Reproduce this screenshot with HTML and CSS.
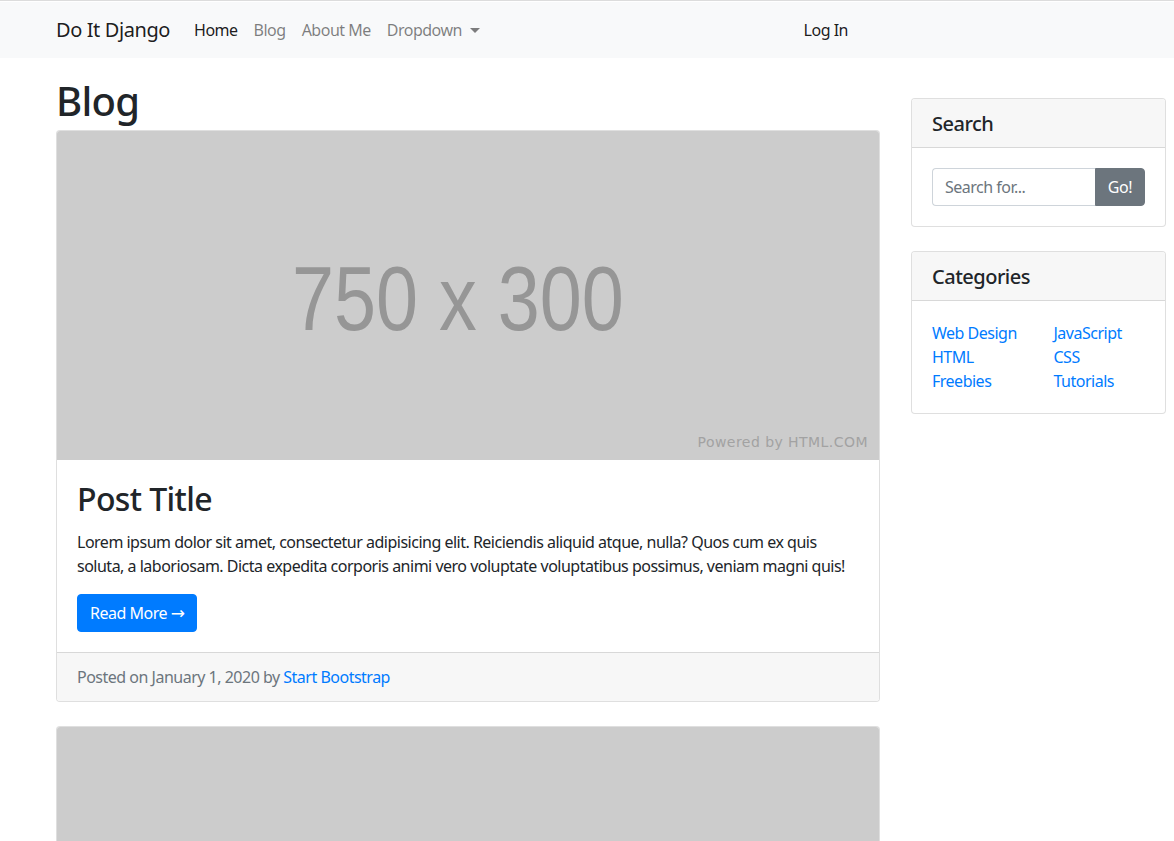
FILE: index.html
```html
<!DOCTYPE html>
<html lang="en">
<head>
<meta charset="utf-8">
<title>Blog</title>
<link rel="stylesheet" href="styles.css">
</head>
<body>
<nav class="navbar">
  <div class="nav-inner">
    <a class="brand" href="#">Do It Django</a>
    <ul class="nav-links">
      <li><a class="nav-link active" href="#">Home</a></li>
      <li><a class="nav-link" href="#">Blog</a></li>
      <li><a class="nav-link" href="#">About Me</a></li>
      <li><a class="nav-link dropdown" href="#">Dropdown<span class="caret"></span></a></li>
    </ul>
    <ul class="nav-links nav-right">
      <li><a class="nav-link active" href="#">Log In</a></li>
    </ul>
  </div>
</nav>

<div class="page">
  <main class="main-col">
    <h1 class="page-title">Blog</h1>

    <article class="card post">
      <div class="placeholder">
        <span class="ph-size">750 x 300</span>
        <span class="ph-credit">Powered by HTML.COM</span>
      </div>
      <div class="card-body">
        <h2 class="post-title">Post Title</h2>
        <p class="post-text">Lorem ipsum dolor sit amet, consectetur adipisicing elit. Reiciendis aliquid atque, nulla? Quos cum ex quis soluta, a laboriosam. Dicta expedita corporis animi vero voluptate voluptatibus possimus, veniam magni quis!</p>
        <a class="btn btn-primary" href="#">Read More <span class="arrow">&rarr;</span></a>
      </div>
      <div class="card-footer">Posted on January 1, 2020 by <a href="#">Start Bootstrap</a></div>
    </article>

    <article class="card post">
      <div class="placeholder"></div>
    </article>
  </main>

  <aside class="side-col">
    <section class="card widget">
      <h5 class="card-header">Search</h5>
      <div class="card-body">
        <div class="input-group">
          <input class="form-control" type="text" placeholder="Search for...">
          <button class="btn btn-secondary" type="button">Go!</button>
        </div>
      </div>
    </section>

    <section class="card widget">
      <h5 class="card-header">Categories</h5>
      <div class="card-body">
        <div class="cat-grid">
          <ul class="cat-list">
            <li><a href="#">Web Design</a></li>
            <li><a href="#">HTML</a></li>
            <li><a href="#">Freebies</a></li>
          </ul>
          <ul class="cat-list">
            <li><a href="#">JavaScript</a></li>
            <li><a href="#">CSS</a></li>
            <li><a href="#">Tutorials</a></li>
          </ul>
        </div>
      </div>
    </section>
  </aside>
</div>
</body>
</html>
```

FILE: styles.css
```css
* { box-sizing: border-box; }

html, body { margin: 0; padding: 0; }

body {
  font-family: "Noto Sans", "Open Sans", sans-serif;
  font-size: 16px;
  line-height: 1.5;
  color: #212529;
  background: #fff;
  letter-spacing: -0.5px;
  border-top: 1px solid #dcdcdc;
  padding-top: 1px;
  overflow: hidden;
}

a { text-decoration: none; color: #007bff; }

/* navbar */
.navbar {
  background: #f8f9fa;
  height: 56px;
}
.nav-inner {
  display: flex;
  align-items: center;
  height: 56px;
  padding-left: 56px;
  width: 864px;
}
.brand {
  font-size: 20px;
  color: rgba(0,0,0,.9);
  margin-right: 16px;
  line-height: 30px;
  letter-spacing: -0.4px;
}
.nav-links {
  list-style: none;
  display: flex;
  margin: 0;
  padding: 0;
}
.nav-right { margin-left: auto; }
.nav-link {
  display: block;
  padding: 8px 8px;
  color: rgba(0,0,0,.5);
}
.nav-link.active { color: rgba(0,0,0,.9); }
.nav-right .nav-link { padding-right: 16px; }
.caret {
  display: inline-block;
  margin-left: 8px;
  vertical-align: 3px;
  border-top: 5px solid rgba(0,0,0,.5);
  border-left: 5px solid transparent;
  border-right: 5px solid transparent;
}

/* page layout */
.page {
  display: grid;
  grid-template-columns: 824px 255px;
  column-gap: 31px;
  padding-left: 56px;
}

.page-title {
  font-size: 40px;
  font-weight: 500;
  line-height: 1.2;
  margin: 19px 0 5px;
  letter-spacing: -0.7px;
}

.card {
  border: 1px solid rgba(0,0,0,.125);
  border-radius: 4px;
  background: #fff;
  overflow: hidden;
}
.post { margin-bottom: 24px; }

.placeholder {
  position: relative;
  height: 329px;
  background: #cccccc;
  display: flex;
  align-items: center;
  justify-content: center;
}
.ph-size {
  font-family: "Liberation Sans", Arial, sans-serif;
  font-size: 91px;
  color: #969696;
  letter-spacing: 0;
  line-height: 1;
  margin-top: 6px;
  margin-left: -20px;
  transform: scaleX(0.83);
}
.ph-credit {
  position: absolute;
  right: 11px;
  bottom: 7px;
  font-family: "DejaVu Sans", sans-serif;
  font-size: 14px;
  letter-spacing: 0.45px;
  color: #a2a2a2;
}

.card-body { padding: 20px; }

.post-title {
  font-size: 32px;
  font-weight: 500;
  line-height: 1.2;
  margin: 0 0 12px;
  letter-spacing: -0.6px;
}
.post-text { margin: 0 0 16px; }

.btn {
  display: inline-block;
  font-family: inherit;
  font-size: 16px;
  line-height: 24px;
  padding: 6px 12px;
  border: 1px solid transparent;
  border-radius: 4px;
  letter-spacing: -0.5px;
}
.arrow { font-family: "DejaVu Sans", sans-serif; font-size: 17px; line-height: 1; }
.btn-primary { background: #007bff; color: #fff; border-color: #007bff; }
.btn-secondary {
  background: #6c757d;
  color: #fff;
  border-color: #6c757d;
  border-radius: 0 4px 4px 0;
}

.card-footer {
  padding: 12px 20px;
  background: #f7f7f7;
  border-top: 1px solid rgba(0,0,0,.125);
  color: #6c757d;
}

/* sidebar */
.side-col { padding-top: 40px; }
.widget { margin-bottom: 24px; }
.card-header {
  margin: 0;
  padding: 13px 20px 11px;
  font-size: 20px;
  font-weight: 500;
  line-height: 1.2;
  background: #f7f7f7;
  border-bottom: 1px solid rgba(0,0,0,.125);
}
.input-group { display: flex; }
.form-control {
  flex: 1;
  min-width: 0;
  height: 38px;
  padding: 6px 12px;
  font-family: inherit;
  font-size: 16px;
  letter-spacing: -0.5px;
  color: #495057;
  border: 1px solid #ced4da;
  border-right: 0;
  border-radius: 4px 0 0 4px;
  outline: none;
}
.form-control::placeholder { color: #6c757d; }

.cat-grid {
  display: grid;
  grid-template-columns: 1fr 1fr;
  column-gap: 30px;
}
.cat-list { list-style: none; margin: 0; padding: 0; }
```
